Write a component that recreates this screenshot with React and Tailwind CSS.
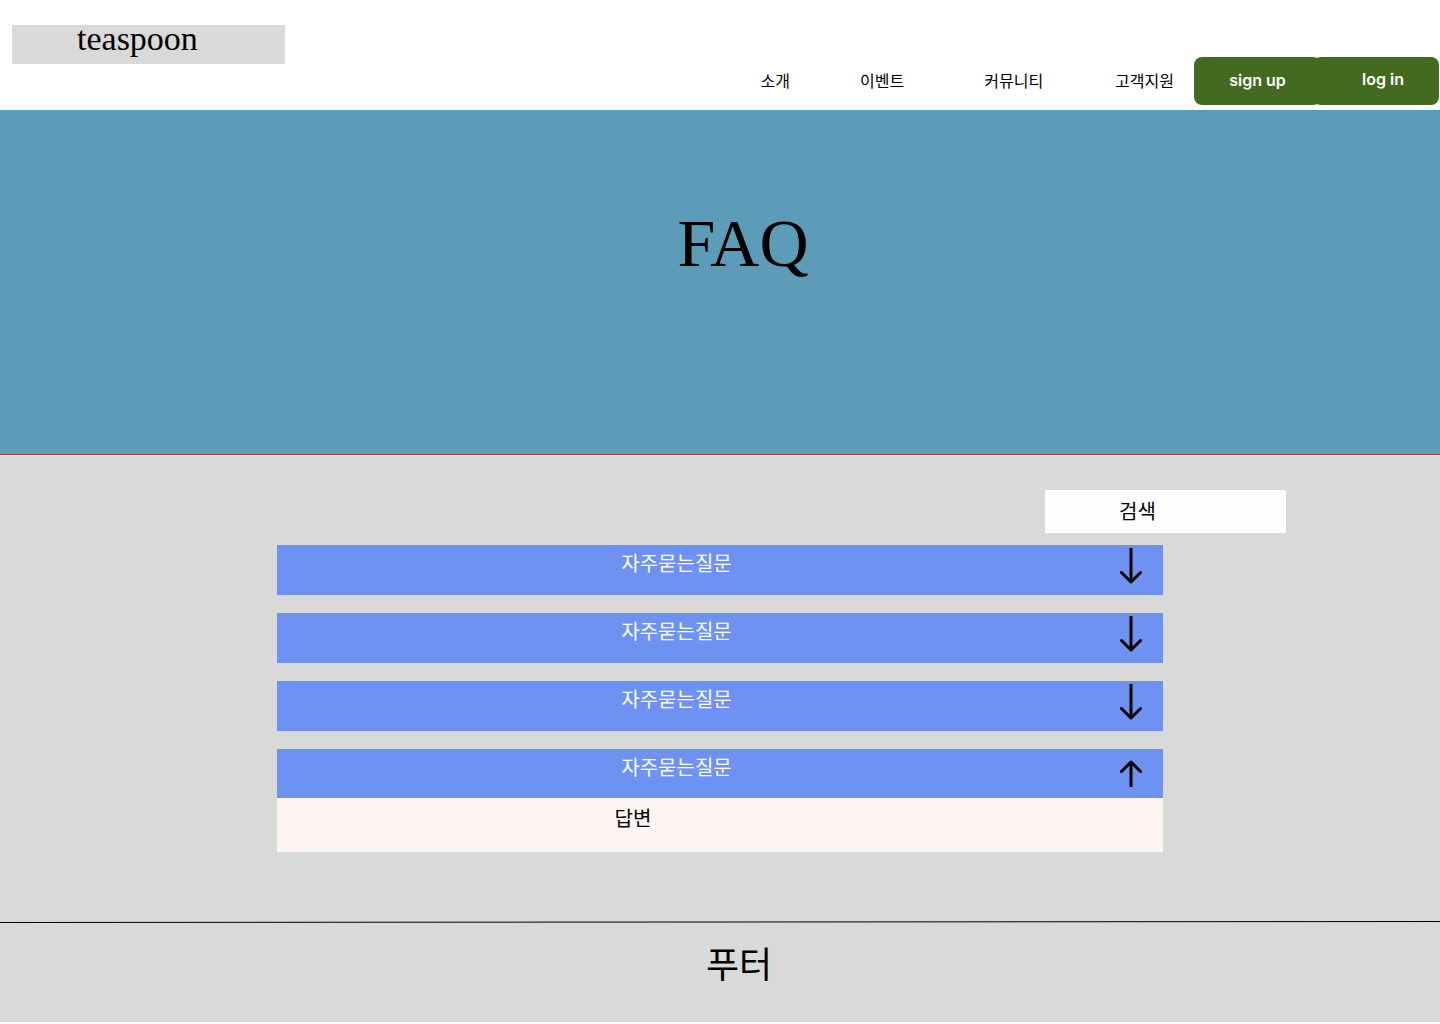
import { useState } from "react";

const NAV_ITEMS = [
  { label: "소개", spacing: "mr-[70px]" },
  { label: "이벤트", spacing: "mr-20" },
  { label: "커뮤니티", spacing: "mr-[72px]" },
  { label: "고객지원", spacing: "mr-5" },
];

const QUESTIONS = [
  { id: "q1", question: "자주묻는질문", answer: "답변" },
  { id: "q2", question: "자주묻는질문", answer: "답변" },
  { id: "q3", question: "자주묻는질문", answer: "답변" },
  { id: "q4", question: "자주묻는질문", answer: "답변" },
];

function ArrowDown() {
  return (
    <svg aria-hidden="true" className="mt-[3px]" width="22" height="36" viewBox="0 0 22 36" fill="none" stroke="#000" strokeWidth="3">
      <path d="M11 0V34" />
      <path d="M1.5 24.5L11 34L20.5 24.5" strokeLinecap="round" strokeLinejoin="round" />
    </svg>
  );
}

function ArrowUp() {
  return (
    <svg aria-hidden="true" className="mt-[11px]" width="22" height="27" viewBox="0 0 22 27" fill="none" stroke="#000" strokeWidth="3">
      <path d="M11 27V2" />
      <path d="M1.5 11.5L11 2L20.5 11.5" strokeLinecap="round" strokeLinejoin="round" />
    </svg>
  );
}

function Header() {
  return (
    <header className="flex h-[110px] items-start justify-between bg-white">
      <a href="#home" className="mt-[25px] ml-3 h-[39px] w-[273px] shrink-0 bg-[#d9d9d9] pl-[65px] font-['Liberation_Serif',serif] text-[34px] leading-7">
        teaspoon
      </a>
      <div className="mt-[57px] flex items-center pr-px">
        <nav className="flex pb-0.5 text-base leading-6 whitespace-nowrap">
          {NAV_ITEMS.map((item) => (
            <a key={item.label} href="#menu" className={item.spacing}>
              {item.label}
            </a>
          ))}
        </nav>
        <button type="button" className="h-12 w-[127px] rounded-lg bg-[#436b1f] pb-0.5 font-['Inter',sans-serif] text-base leading-6 font-semibold text-white">
          sign up
        </button>
        <button type="button" className="-ml-2 h-12 w-[126px] rounded-lg bg-[#436b1f] pb-1 pl-3.5 font-['Inter',sans-serif] text-base leading-6 font-semibold text-white">
          log in
        </button>
      </div>
    </header>
  );
}

function FaqItem({ item, open, onToggle }) {
  return (
    <li>
      <h2>
        <button
          type="button"
          aria-expanded={open}
          aria-controls={item.id}
          onClick={onToggle}
          className={`flex w-full items-start bg-[#6e92f2] pr-[21px] text-white ${open ? "h-[49px]" : "h-[50px]"}`}
        >
          <span className="flex-1 pt-1 pr-11 text-center text-xl leading-7">{item.question}</span>
          {open ? <ArrowUp /> : <ArrowDown />}
        </button>
      </h2>
      {open && (
        <p id={item.id} className="h-[54px] bg-[#fcf3f3] pt-1.5 pr-[174px] text-center text-xl leading-7">
          {item.answer}
        </p>
      )}
    </li>
  );
}

export default function App() {
  const [openId, setOpenId] = useState("q4");

  return (
    <div className="min-h-screen bg-white font-['Noto_Sans_CJK_KR',sans-serif] text-black">
      <Header />
      <main>
        <section className="h-[345px] border-b border-[#a33b45] bg-[#5c9cb9] pt-[93px] pl-[46px] text-center">
          <h1 className="font-['Liberation_Serif',serif] text-[68px] leading-20">FAQ</h1>
        </section>
        <section className="mt-px bg-[#d9d9d9] pt-[34px] pb-[69px]">
          <form role="search" className="flex justify-end pr-[154px]" onSubmit={(e) => e.preventDefault()}>
            <input
              type="search"
              aria-label="검색"
              placeholder="검색"
              className="h-[43px] w-[241px] bg-[#fffdfe] px-[74px] pb-0.5 text-xl text-black outline-none placeholder:text-black"
            />
          </form>
          <ul className="mx-auto mt-3 flex w-full max-w-[886px] flex-col gap-[18px]">
            {QUESTIONS.map((item) => (
              <FaqItem
                key={item.id}
                item={item}
                open={openId === item.id}
                onToggle={() => setOpenId(openId === item.id ? null : item.id)}
              />
            ))}
          </ul>
        </section>
      </main>
      <footer className="bg-[#d9d9d9]">
        <svg aria-hidden="true" className="block h-0.5 w-full" viewBox="0 0 1440 2" preserveAspectRatio="none">
          <path d="M0 1.5L1440 0.5" stroke="#000" strokeWidth="1" />
        </svg>
        <p className="h-[99px] pt-[13px] pl-[38px] text-center text-4xl leading-[52px]">푸터</p>
      </footer>
    </div>
  );
}
